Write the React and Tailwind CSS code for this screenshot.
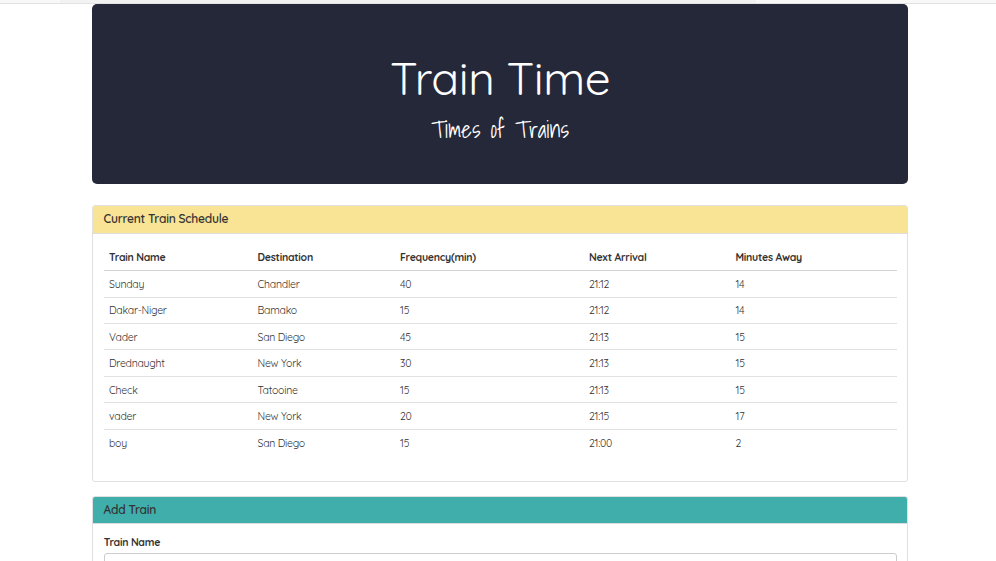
const trains = [
  ["Sunday", "Chandler", "40", "21:12", "14"],
  ["Dakar-Niger", "Bamako", "15", "21:12", "14"],
  ["Vader", "San Diego", "45", "21:13", "15"],
  ["Drednaught", "New York", "30", "21:13", "15"],
  ["Check", "Tatooine", "15", "21:13", "15"],
  ["vader", "New York", "20", "21:15", "17"],
  ["boy", "San Diego", "15", "21:00", "2"],
];

const columns = "grid grid-cols-[148.5px_142.5px_189px_146.5px_1fr] items-center pl-[5.3px]";

function Panel({ title, headerClass, className, children }) {
  return (
    <section className={`rounded-[3px] border border-[#e0e0e0] bg-white ${className}`}>
      <h2 className={`flex items-center rounded-t-[2px] border-b border-[#dddddd] pl-[10.6px] text-[12px] font-semibold tracking-[-0.26px] text-[#333333] ${headerClass}`}>
        {title}
      </h2>
      {children}
    </section>
  );
}

export default function App() {
  return (
    <div className="h-[561px] overflow-hidden bg-white font-['Quicksand','Lato',sans-serif] text-[#333333]">
      <div className="flex h-1 border-b border-[#e2e2e2] bg-[#f8f8f8]">
        <div className="ml-[60px] w-[696px] bg-[#f2f2f2]" />
      </div>
      <main className="ml-[92px] w-[816.3px]">
        <header className="flex h-[179.6px] flex-col items-center rounded-[5px] bg-[#252839] text-white">
          <h1 className="mt-[45px] h-[58px] whitespace-nowrap text-[46px] leading-[58px] font-normal tracking-[-0.45px]">
            Train Time
          </h1>
          <p className="mt-[6px] h-[34px] whitespace-nowrap font-['Shadows_Into_Light','Lato',cursive] text-[23px] leading-[34px] font-normal">
            Times of Trains
          </p>
        </header>

        <Panel
          title="Current Train Schedule"
          headerClass="h-[28px] bg-[#f9e394] pb-px"
          className="mt-[21.4px] h-[277px]"
        >
          <div className="px-[10.7px] pt-[9.8px]">
            <div className={`${columns} h-[27.5px] border-b border-[#d4d4d4] pt-[2px] text-[10.5px] font-bold tracking-[-0.24px]`}>
              <span>Train Name</span>
              <span>Destination</span>
              <span>Frequency(min)</span>
              <span>Next Arrival</span>
              <span>Minutes Away</span>
            </div>
            {trains.map((train, i) => (
              <div key={i} className={`${columns} h-[26.4px] border-b border-[#e2e2e2] pt-[2px] text-[10.5px] font-normal tracking-[-0.23px] text-[#333333] last:border-0`}>
                {train.map((value, j) => (
                  <span key={j}>{value}</span>
                ))}
              </div>
            ))}
          </div>
        </Panel>

        <Panel
          title="Add Train"
          headerClass="h-[27px] bg-[#40afab]"
          className="mt-[14px] h-[200px]"
        >
          <form className="px-[10.7px] pt-[9px]">
            <label htmlFor="train-name" className="block h-[20px] text-[10.5px] leading-[18px] font-bold tracking-[-0.24px]">
              Train Name
            </label>
            <input id="train-name" className="block h-[27px] w-full rounded-[3px] border border-[#cccccc] bg-white" />
          </form>
        </Panel>
      </main>
    </div>
  );
}
